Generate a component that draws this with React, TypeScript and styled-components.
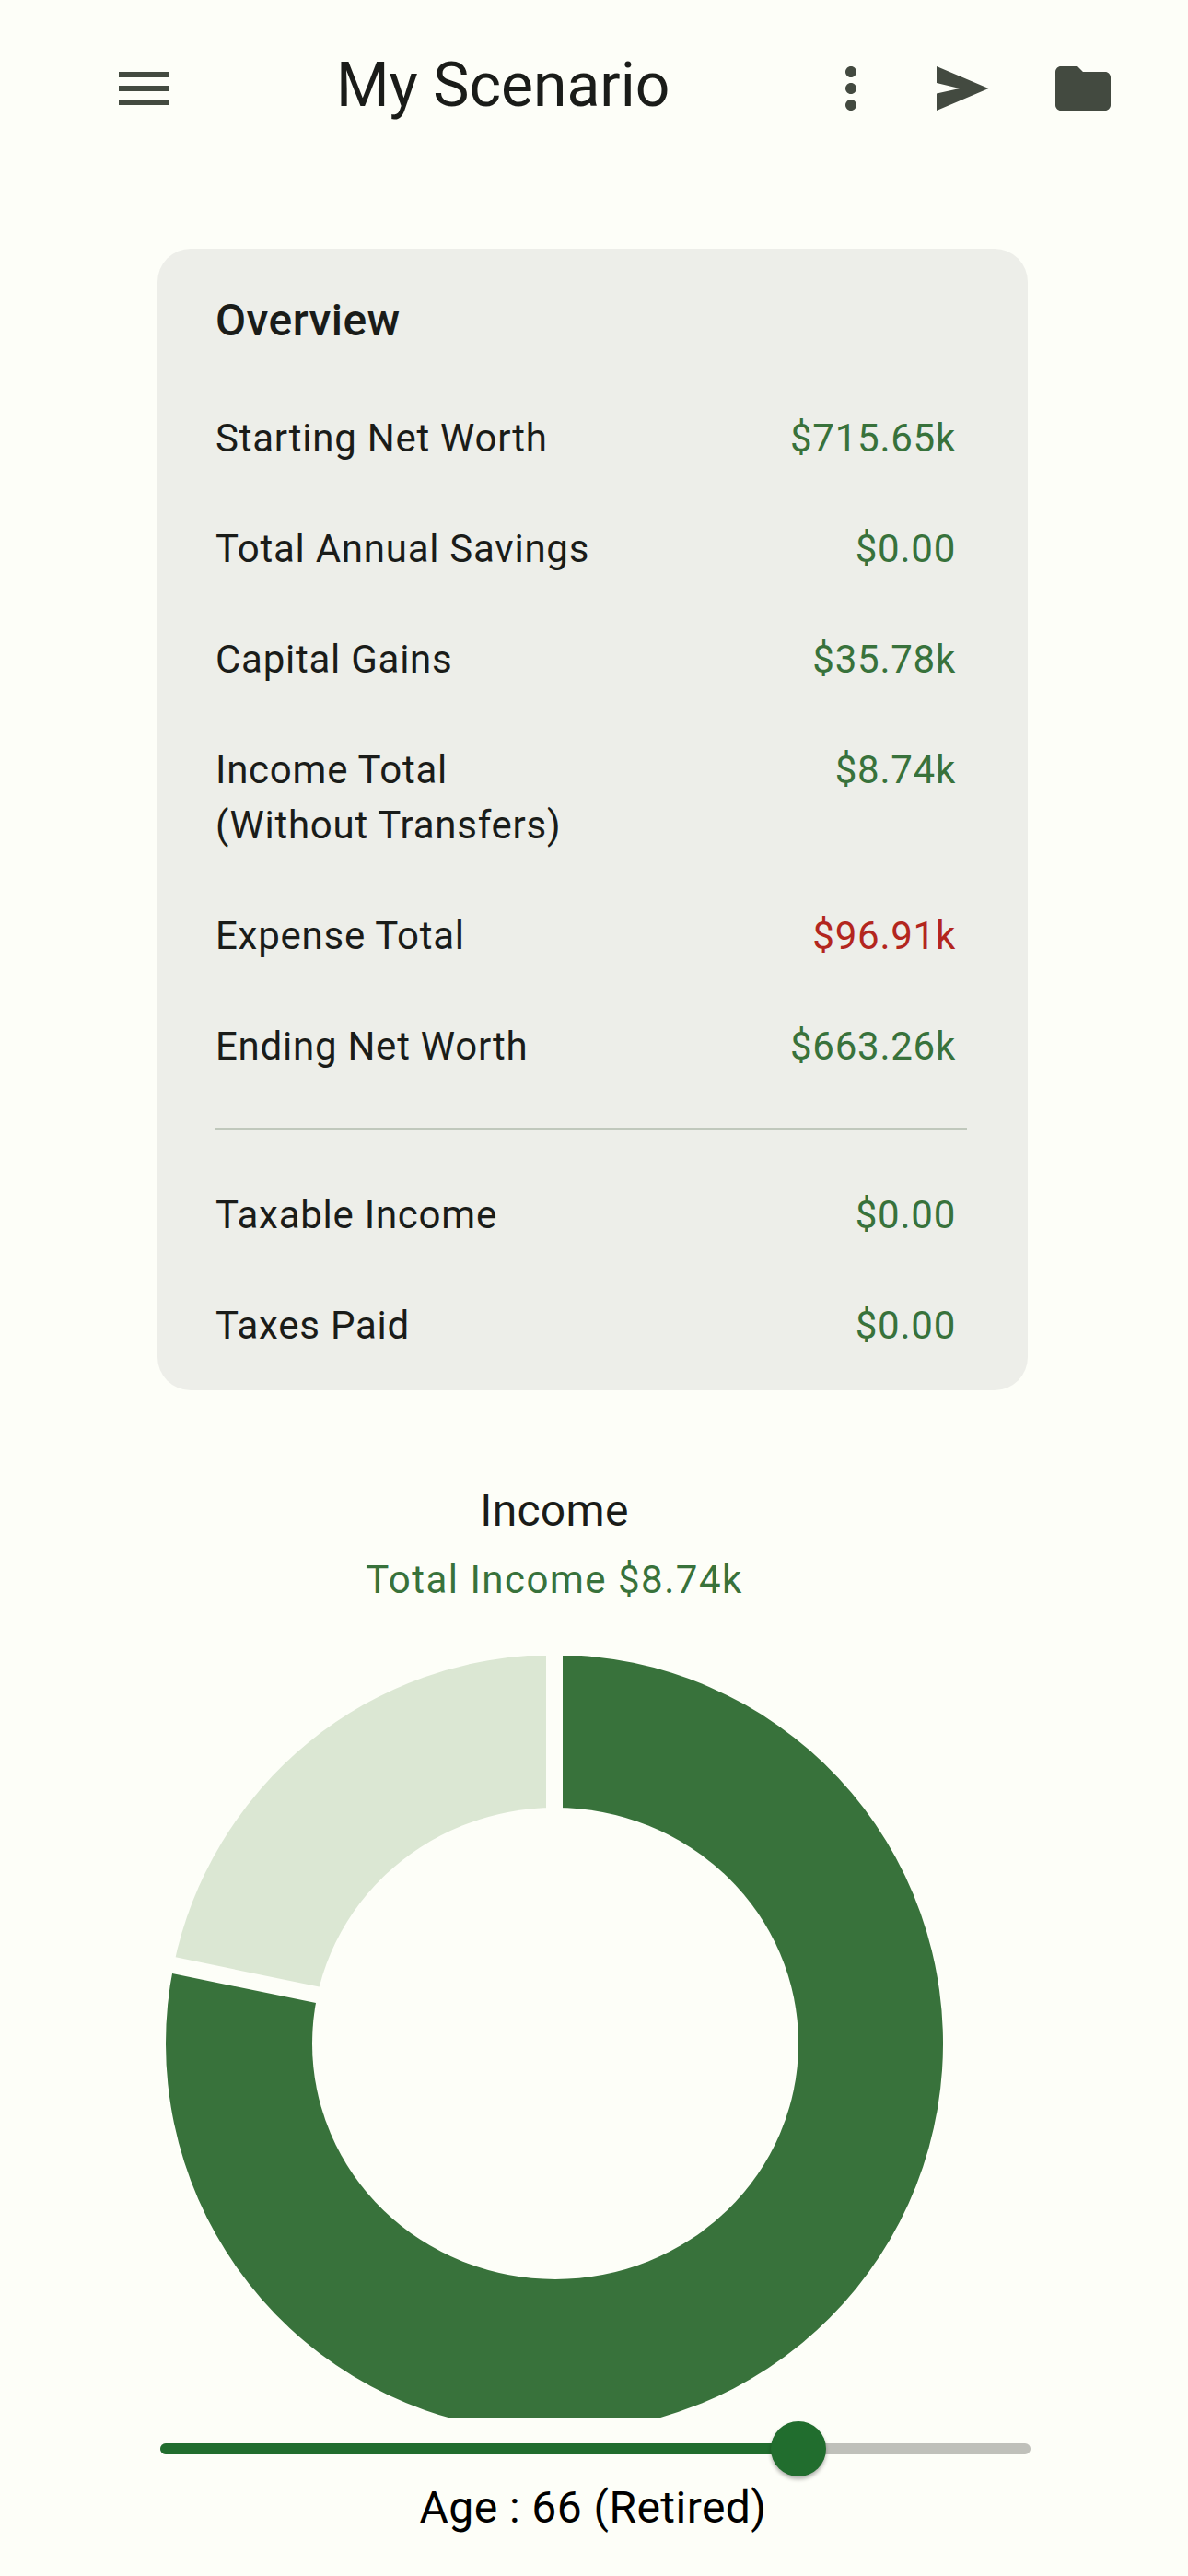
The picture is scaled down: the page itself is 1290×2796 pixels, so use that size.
import React from 'react';
import styled, { createGlobalStyle } from 'styled-components';

const GlobalStyle = createGlobalStyle`
  html, body {
    margin: 0;
    padding: 0;
    background: #fdfef8;
  }
  * {
    box-sizing: border-box;
  }
`;

type RowData = { label: string[]; value: string; negative?: boolean };

const topRows: RowData[] = [
  { label: ['Starting Net Worth'], value: '$715.65k' },
  { label: ['Total Annual Savings'], value: '$0.00' },
  { label: ['Capital Gains'], value: '$35.78k' },
  { label: ['Income Total', '(Without Transfers)'], value: '$8.74k' },
  { label: ['Expense Total'], value: '$96.91k', negative: true },
  { label: ['Ending Net Worth'], value: '$663.26k' },
];

const bottomRows: RowData[] = [
  { label: ['Taxable Income'], value: '$0.00' },
  { label: ['Taxes Paid'], value: '$0.00' },
];

const BG = '#fdfef8';
const CX = 422;
const CY = 421;
const OUTER = 422;
const SPLIT = 281.6; // where the dark slice ends, clockwise from 12 o'clock

const point = (deg: number) => {
  const rad = (deg * Math.PI) / 180;
  return {
    x: CX + (OUTER + 6) * Math.sin(rad),
    y: CY - (OUTER + 6) * Math.cos(rad),
  };
};

const rim = (deg: number) => {
  const rad = (deg * Math.PI) / 180;
  return `${(CX + OUTER * Math.sin(rad)).toFixed(2)} ${(CY - OUTER * Math.cos(rad)).toFixed(2)}`;
};

const pie = (from: number, to: number) => {
  const large = to - from > 180 ? 1 : 0;
  return `M${CX} ${CY} L${rim(from)} A${OUTER} ${OUTER} 0 ${large} 1 ${rim(to)} Z`;
};

const Summary = ({ rows }: { rows: RowData[] }) => (
  <RowList>
    {rows.map((row) => (
      <Row key={row.label[0]}>
        <Label>
          {row.label.map((line) => (
            <div key={line}>{line}</div>
          ))}
        </Label>
        <Value $negative={row.negative}>{row.value}</Value>
      </Row>
    ))}
  </RowList>
);

export default function App() {
  return (
    <Page>
      <GlobalStyle />
      <Header>
        <IconBox>
          <svg viewBox="0 0 24 24" width="72" height="72" fill="#434a40">
            <path d="M3 18h18v-2H3v2zm0-5h18v-2H3v2zm0-7v2h18V6H3z" />
          </svg>
        </IconBox>
        <Title>My Scenario</Title>
        <Actions>
          <IconBox>
            <svg viewBox="0 0 24 24" width="72" height="72" fill="#434a40">
              <path d="M12 8c1.1 0 2-.9 2-2s-.9-2-2-2-2 .9-2 2 .9 2 2 2zm0 2c-1.1 0-2 .9-2 2s.9 2 2 2 2-.9 2-2-.9-2-2-2zm0 6c-1.1 0-2 .9-2 2s.9 2 2 2 2-.9 2-2-.9-2-2-2z" />
            </svg>
          </IconBox>
          <SendBox>
            <svg viewBox="0 0 72 72" width="72" height="72" fill="#434a40">
              <polygon points="8,12 64.5,36 8,60 8,41.5 33,36 8,30" />
            </svg>
          </SendBox>
          <IconBox>
            <svg viewBox="0 0 24 24" width="72" height="72" fill="#434a40">
              <path d="M10 4H4c-1.1 0-1.99.9-1.99 2L2 18c0 1.1.9 2 2 2h16c1.1 0 2-.9 2-2V8c0-1.1-.9-2-2-2h-8l-2-2z" />
            </svg>
          </IconBox>
        </Actions>
      </Header>

      <Card>
        <CardTitle>Overview</CardTitle>
        <Summary rows={topRows} />
        <Divider />
        <Summary rows={bottomRows} />
      </Card>

      <ChartSection>
        <ChartTitle>Income</ChartTitle>
        <ChartTotal>Total Income $8.74k</ChartTotal>
        <Donut viewBox="0 0 844 828" width="844" height="828">
          <path d={pie(0, SPLIT)} fill="#38723b" />
          <path d={pie(SPLIT, 360)} fill="#dbe7d3" />
          <line x1={CX} y1={CY} x2={point(0).x} y2={point(0).y} stroke={BG} strokeWidth="18" />
          <line x1={CX} y1={CY} x2={point(SPLIT).x} y2={point(SPLIT).y} stroke={BG} strokeWidth="18" />
          <ellipse cx={CX + 1} cy={CY} rx="264" ry="256" fill={BG} />
        </Donut>
      </ChartSection>

      <Slider>
        <Track>
          <TrackFill style={{ width: `${(693 / 945) * 100}%` }} />
        </Track>
        <Thumb />
      </Slider>
      <AgeLabel>Age : 66 (Retired)</AgeLabel>
    </Page>
  );
}

const Page = styled.div`
  width: 1290px;
  height: 2796px;
  overflow: hidden;
  background: #fdfef8;
  color: #1a1c19;
  font-family: Roboto, sans-serif;
`;

const Header = styled.header`
  display: flex;
  align-items: center;
  height: 72px;
  margin-top: 60px;
  padding: 0 78px 0 120px;
`;

const IconBox = styled.div`
  display: flex;
  align-items: center;
  justify-content: center;
  width: 72px;
  height: 72px;
`;

const SendBox = styled(IconBox)`
  margin-right: 10px;
`;

const Title = styled.h1`
  margin: 0 0 6px 173px;
  font-size: 66px;
  font-weight: 400;
  line-height: 72px;
  white-space: nowrap;
`;

const Actions = styled.div`
  display: flex;
  align-items: center;
  gap: 49px;
  margin-left: auto;
`;

const Card = styled.section`
  width: 945px;
  margin: 138px 0 0 171px;
  padding: 42px 66px 40px 63px;
  background: #edeee9;
  border-radius: 36px;
`;

const CardTitle = styled.h2`
  margin: 0 0 62px;
  font-size: 48px;
  font-weight: 500;
  line-height: 72px;
  letter-spacing: 0.45px;
`;

const RowList = styled.div`
  display: flex;
  flex-direction: column;
  gap: 60px;
`;

const Row = styled.div`
  display: flex;
  justify-content: space-between;
  padding-right: 12px;
  font-size: 42px;
  line-height: 60px;
  letter-spacing: 0.75px;
`;

const Label = styled.div`
  color: #1a1c19;
`;

const Value = styled.div<{ $negative?: boolean }>`
  color: ${(p) => (p.$negative ? '#b3261e' : '#38723b')};
`;

const Divider = styled.hr`
  height: 3px;
  margin: 58px 0 62px;
  border: 0;
  background: #c0c8bc;
`;

const ChartSection = styled.section`
  display: flex;
  flex-direction: column;
  align-items: center;
  width: 844px;
  margin: 95px 0 0 180px;
`;

const ChartTitle = styled.div`
  font-size: 48px;
  line-height: 72px;
  letter-spacing: 0.3px;
`;

const ChartTotal = styled.div`
  margin-top: 9px;
  color: #38723b;
  font-size: 42px;
  line-height: 60px;
  letter-spacing: 1.5px;
`;

const Donut = styled.svg`
  display: block;
  margin-top: 52px;
`;

const Slider = styled.div`
  position: relative;
  display: flex;
  align-items: center;
  width: 945px;
  height: 60px;
  margin: 3px 0 0 174px;
`;

const Track = styled.div`
  width: 100%;
  height: 12px;
  overflow: hidden;
  background: #bfc0ba;
  border-radius: 6px;
`;

const TrackFill = styled.div`
  height: 100%;
  background: #216d2e;
`;

const Thumb = styled.div`
  position: absolute;
  top: 0;
  left: 663px;
  width: 60px;
  height: 60px;
  background: #216d2e;
  border-radius: 50%;
  box-shadow: 0 3px 4px rgba(0, 0, 0, 0.3);
`;

const AgeLabel = styled.div`
  width: 945px;
  margin-left: 174px;
  padding-right: 5px;
  color: #000;
  font-size: 48px;
  line-height: 68px;
  letter-spacing: 0.45px;
  text-align: center;
`;
